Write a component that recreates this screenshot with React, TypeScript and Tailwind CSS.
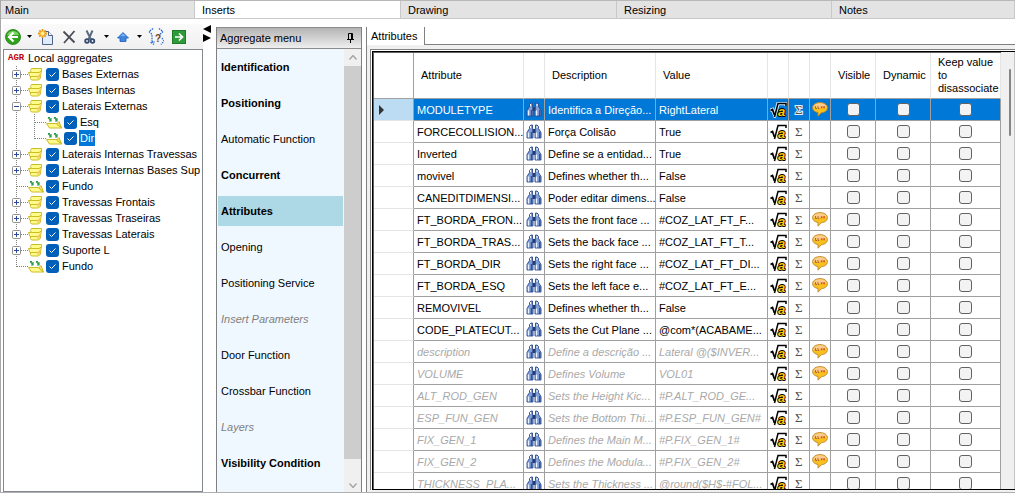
import React, { useState } from 'react';
import clsx from 'clsx';

interface TreeItem {
  label: string;
  leaf?: boolean;
  open?: boolean;
  children?: TreeItem[];
}

interface MenuItem {
  label: string;
  style?: 'bold' | 'disabled';
}

interface AttributeRow {
  name: string;
  description: string;
  value: string;
  comment?: boolean;
  inherited?: boolean;
}

const tabs = ['Main', 'Inserts', 'Drawing', 'Resizing', 'Notes'];

const tree: TreeItem[] = [
  { label: 'Bases Externas' },
  { label: 'Bases Internas' },
  { label: 'Laterais Externas', open: true, children: [{ label: 'Esq', leaf: true }, { label: 'Dir', leaf: true }] },
  { label: 'Laterais Internas Travessas' },
  { label: 'Laterais Internas Bases Sup' },
  { label: 'Fundo', leaf: true },
  { label: 'Travessas Frontais' },
  { label: 'Travessas Traseiras' },
  { label: 'Travessas Laterais' },
  { label: 'Suporte L' },
  { label: 'Fundo', leaf: true },
];

const menu: MenuItem[] = [
  { label: 'Identification', style: 'bold' },
  { label: 'Positioning', style: 'bold' },
  { label: 'Automatic Function' },
  { label: 'Concurrent', style: 'bold' },
  { label: 'Attributes', style: 'bold' },
  { label: 'Opening' },
  { label: 'Positioning Service' },
  { label: 'Insert Parameters', style: 'disabled' },
  { label: 'Door Function' },
  { label: 'Crossbar Function' },
  { label: 'Layers', style: 'disabled' },
  { label: 'Visibility Condition', style: 'bold' },
];

const rows: AttributeRow[] = [
  { name: 'MODULETYPE', description: 'Identifica a Direção...', value: 'RightLateral', comment: true },
  { name: 'FORCECOLLISION...', description: 'Força Colisão', value: 'True' },
  { name: 'Inverted', description: 'Define se a entidad...', value: 'True' },
  { name: 'movivel', description: 'Defines whether th...', value: 'False' },
  { name: 'CANEDITDIMENSI...', description: 'Poder editar dimens...', value: 'False' },
  { name: 'FT_BORDA_FRON...', description: 'Sets the front face ...', value: '#COZ_LAT_FT_F...', comment: true },
  { name: 'FT_BORDA_TRAS...', description: 'Sets the back face ...', value: '#COZ_LAT_FT_T...', comment: true },
  { name: 'FT_BORDA_DIR', description: 'Sets the right face ...', value: '#COZ_LAT_FT_DI...', comment: true },
  { name: 'FT_BORDA_ESQ', description: 'Sets the left face e...', value: '#COZ_LAT_FT_E...', comment: true },
  { name: 'REMOVIVEL', description: 'Defines whether th...', value: 'False' },
  { name: 'CODE_PLATECUT...', description: 'Sets the Cut Plane ...', value: '@com*(ACABAME...' },
  { name: 'description', description: 'Define a descrição ...', value: 'Lateral @($INVER...', comment: true, inherited: true },
  { name: 'VOLUME', description: 'Defines Volume', value: 'VOL01', comment: true, inherited: true },
  { name: 'ALT_ROD_GEN', description: 'Sets the Height Kic...', value: '#P.ALT_ROD_GE...', inherited: true },
  { name: 'ESP_FUN_GEN', description: 'Sets the Bottom Thi...', value: '#P.ESP_FUN_GEN#', inherited: true },
  { name: 'FIX_GEN_1', description: 'Defines the Main M...', value: '#P.FIX_GEN_1#', comment: true, inherited: true },
  { name: 'FIX_GEN_2', description: 'Defines the Modula...', value: '#P.FIX_GEN_2#', comment: true, inherited: true },
  { name: 'THICKNESS_PLA...', description: 'Sets the Thickness ...', value: '@round($H$-#FOL...', inherited: true },
];

/* ---------- icons ---------- */

const BackIcon = () => (
  <svg width="16" height="16" viewBox="0 0 16 16">
    <circle cx="8" cy="8" r="7.5" fill="#2fa31c" stroke="#1c7d12" strokeWidth="0.8" />
    <path d="M2 6a6.5 6.5 0 0 1 12 0z" fill="#7bd063" />
    <path d="M8.500 3.500 4 8l4.500 4.500M4.500 8H13" fill="none" stroke="#fff" strokeWidth="2.200" />
  </svg>
);

const NewIcon = () => (
  <svg width="16" height="16" viewBox="0 0 16 16">
    <path d="M4.500 2.500h6l4 4v9h-10z" fill="#dfeafa" stroke="#4f6287" />
    <path d="M10.500 2.500v4h4" fill="#fff" stroke="#4f6287" />
    <path d="M4.500 0v9M0 4.500h9M1.300 1.300l6.400 6.400M7.700 1.300 1.300 7.700" stroke="#e8981c" strokeWidth="1.800" />
    <circle cx="4.500" cy="4.500" r="2.200" fill="#fff3a0" stroke="#f5bc30" />
  </svg>
);

const DeleteIcon = () => (
  <svg width="14" height="14" viewBox="0 0 14 14">
    <path d="m1.500 1.500 11 11M12.500 1 2 13" fill="none" stroke="#4a4d55" strokeWidth="1.800" />
  </svg>
);

const CutIcon = () => (
  <svg width="12" height="14" viewBox="0 0 12 14">
    <path d="m2.500.500 4.500 9M8.500.500 4.500 9.500" stroke="#5c6b80" strokeWidth="2" />
    <circle cx="3" cy="11" r="1.800" fill="none" stroke="#34496e" strokeWidth="1.800" />
    <circle cx="8.500" cy="11" r="1.800" fill="none" stroke="#34496e" strokeWidth="1.800" />
  </svg>
);

const UpIcon = () => (
  <svg width="12" height="10" viewBox="0 0 12 10">
    <path d="M6 .500 11.500 6H9v3.500H3V6H.500z" fill="#3f86e0" stroke="#1d5cb8" strokeWidth="0.800" />
    <path d="M6 1.500 8.500 4h-5z" fill="#7db4f3" />
  </svg>
);

const CodeIcon = () => (
  <svg width="16" height="17" viewBox="0 0 16 17">
    <path
      d="M5 .500 1 3.500l3 3v7l-1 1 3 2M11 .500l4 3-3 3M14 10l2 3-3 3.500M4 14h3"
      fill="none"
      stroke="#2468d8"
      strokeWidth="1.300"
      strokeDasharray="1.500 1"
    />
    <text x="7" y="14" fontSize="10" fontWeight="bold" fill="#6b4420" fontFamily="Liberation Sans, sans-serif">?</text>
  </svg>
);

const GoIcon = () => (
  <svg width="14" height="14" viewBox="0 0 14 14">
    <rect x="0.500" y="0.500" width="13" height="13" fill="#2f9a3a" stroke="#1f7a2a" />
    <path d="M3 7h7M7 3.500 10.500 7 7 10.500" fill="none" stroke="#fff" strokeWidth="1.700" />
  </svg>
);

const CaretIcon = () => (
  <svg width="5" height="3" viewBox="0 0 5 3">
    <path d="M0 0h5L2.500 3z" fill="#000" />
  </svg>
);

const PinIcon = () => (
  <svg width="7" height="10" viewBox="0 0 7 10">
    <path d="M1.500 6V.500h4V6M0 6.500h7M3.500 7v3M4.500 1v5" fill="none" stroke="#000" />
  </svg>
);

const StackIcon = () => (
  <svg width="15" height="14" viewBox="0 0 15 14">
    <path d="M2.500 9.500h8l2-1.500v3l-2 2h-7l-1-1.500z" fill="#fffc8c" stroke="#cdbb28" />
    <path d="M.500 5.500h9.500l3.500-1.500-1 4-2.500 1.500h-8z" fill="#fffc8c" stroke="#cdbb28" />
    <path d="M3.500 1.500h10v2.500l-2.500 1.500h-7.500l-1-2z" fill="#fffc8c" stroke="#cdbb28" />
    <path d="M9.500 9 12.500 6v4l-3 2.500z" fill="#f5c868" />
  </svg>
);

const PieceIcon = () => (
  <svg width="16" height="13" viewBox="0 0 16 13">
    <path d="M.500 7.500h11l4 4.500H3.500z" fill="#fffc8c" stroke="#cdbb28" />
    <path d="m10.500 8 2.500-2.500 2.500 6.500z" fill="#f7dc68" stroke="#cdbb28" />
    <path d="M2 1.500l3 3M2 1.500h2M5 2v3H3M8 1.500l3 3M8 1.500h2M11 2v3H9" fill="none" stroke="#2a9a44" strokeWidth="1.200" />
  </svg>
);

const BinocularsIcon = () => (
  <svg width="16" height="15" viewBox="0 0 16 15" className="mx-auto block">
    <path d="M3.500 2.500 5 1h1.500v3L7 5.500V14H1V8.500l2.500-4z" fill="#7f9fd6" stroke="#2c4a8c" strokeWidth="0.900" />
    <path d="M9.500 1H11l1.500 1.500v2l2.500 4V14H9V5.500l.5-1.500z" fill="#7f9fd6" stroke="#2c4a8c" strokeWidth="0.900" />
    <path d="M6.500 5h3v4h-3z" fill="#263e78" />
    <path d="M2.500 8.500v5M10.500 8.500v5" stroke="#e9f1ff" strokeWidth="1.300" />
    <path d="M5.500 8v6M13.700 8v6" stroke="#2f50a0" strokeWidth="1.400" />
    <path d="M4.500 2v2M11 2v2" stroke="#fff" />
  </svg>
);

const FormulaIcon = ({ outlined }: { outlined?: boolean }) => (
  <svg width="17" height="16" viewBox="0 0 17 16" className="mx-auto block">
    {outlined && <path d="M0 8.500 2.500 7.500l2.300 6L8 1.500h8V4" fill="none" stroke="#cfe6fa" strokeWidth="3.500" />}
    <path d="M.500 8.500 2.500 7.500l2 5.500" fill="none" stroke="#000" strokeWidth="1.800" />
    <path d="M4.500 15 8 1.500h8V4" fill="none" stroke="#000" strokeWidth="1.500" />
    <text
      x="8"
      y="14"
      fontSize="13"
      fontWeight="bold"
      fontStyle="italic"
      fontFamily="Liberation Sans, sans-serif"
      fill="#ffc800"
      stroke="#000"
      strokeWidth="1.800"
      strokeLinejoin="round"
      paintOrder="stroke"
    >
      a
    </text>
  </svg>
);

const SigmaIcon = ({ outlined }: { outlined?: boolean }) => (
  <svg width="12" height="16" viewBox="0 0 12 16" className="mx-auto block">
    <text
      x="2"
      y="12"
      fontSize="13"
      fontStyle="normal"
      fontFamily="Liberation Serif, serif"
      fill="#505050"
      stroke={outlined ? '#e4f0fb' : 'none'}
      strokeWidth="2"
      paintOrder="stroke"
    >
      Σ
    </text>
  </svg>
);

const CommentIcon = () => (
  <svg width="16" height="15" viewBox="0 0 16 15" className="mx-auto block">
    <path
      d="M8 .600c4.200 0 7.400 2.200 7.400 5.100 0 2.800-2.400 4.700-6 5L6 14.200v-3.700C2.700 9.900.600 8.200.600 5.700.600 2.800 3.800.600 8 .600z"
      fill="#f9c11c"
      stroke="#b8863a"
      strokeWidth="0.900"
    />
    <path d="M8 1.300c3.600 0 6.200 1.500 6.600 4.200H1.400C1.800 2.800 4.400 1.300 8 1.300z" fill="#fbcb90" />
    <path d="M3.500 4v2.500h1.500M6 4v2.500h1.200" fill="none" stroke="#a8602a" strokeWidth="0.900" />
    <path d="M8.800 4.200h1.700v2H8.800zM11.200 4.200H13v2h-1.800z" fill="#e05a1c" />
  </svg>
);

/* Dotted guide lines of the tree, with the expander box when the node has one */
const Guide = ({ expander, last }: { expander?: '+' | '-'; last?: boolean }) => (
  <svg width="24" height="16" viewBox="0 0 24 16" className="shrink-0">
    <path d={last ? 'M12.500 0V9' : 'M12.500 0V16'} stroke="#808080" strokeDasharray="1 1" />
    <path d="M13 8.500H24" stroke="#808080" strokeDasharray="1 1" />
    {expander && (
      <>
        <rect x="8.500" y="4.500" width="8" height="8" rx="1" fill="#fff" stroke="#919191" />
        <path d={expander === '+' ? 'M10 8.500h5M12.500 6v5' : 'M10 8.500h5'} stroke="#2b4a9b" />
      </>
    )}
  </svg>
);

const Trunk = () => (
  <svg width="18" height="16" viewBox="0 0 18 16" className="shrink-0">
    <path d="M12.500 0V16" stroke="#808080" strokeDasharray="1 1" />
  </svg>
);

/* ---------- tree ---------- */

interface TreeRowProps {
  item: TreeItem;
  id: string;
  level: number;
  last: boolean;
  selected: boolean;
}

function TreeRow({ item, id, level, last, selected }: TreeRowProps) {
  const expander = item.leaf ? undefined : item.open ? '-' : '+';

  return (
    <div className="flex h-4 items-center">
      {level > 0 && <Trunk />}
      <Guide expander={expander} last={last} />
      <span className="flex w-[18px] shrink-0 items-center">{item.leaf ? <PieceIcon /> : <StackIcon />}</span>
      <span className="grid shrink-0">
        <input
          id={id}
          type="checkbox"
          defaultChecked
          className="col-start-1 row-start-1 size-[13px] appearance-none rounded-[3px] bg-[#005fb8]"
        />
        <svg width="13" height="13" viewBox="0 0 13 13" className="pointer-events-none col-start-1 row-start-1">
          <path d="m3.500 6.500 2 2 4-4" fill="none" stroke="#fff" />
        </svg>
      </span>
      <label
        htmlFor={id}
        className={clsx('ml-0.5 h-4 px-px leading-4 whitespace-nowrap', selected && 'bg-[#0078d7] text-white')}
      >
        {item.label}
      </label>
    </div>
  );
}

function AggregateTree() {
  return (
    <div className="min-h-0 flex-1 overflow-hidden border border-[#828790] bg-white">
      <div className="flex h-4 items-center">
        <span className="w-[23px] shrink-0 pl-1 font-['Liberation_Mono',monospace] text-[9px] font-bold text-[#c00000]">AGR</span>
        <span className="px-px">Local aggregates</span>
      </div>
      <ul>
        {tree.map((item, i) => (
          <li key={i}>
            <TreeRow item={item} id={`node-${i}`} level={0} last={i === tree.length - 1} selected={false} />
            {item.children && (
              <ul>
                {item.children.map((child, j) => (
                  <li key={j}>
                    <TreeRow
                      item={child}
                      id={`node-${i}-${j}`}
                      level={1}
                      last={j === item.children!.length - 1}
                      selected={child.label === 'Dir'}
                    />
                  </li>
                ))}
              </ul>
            )}
          </li>
        ))}
      </ul>
    </div>
  );
}

function Toolbar() {
  return (
    <div className="flex h-[25px] items-center bg-linear-to-b from-[#fafafa] to-[#f0f0f0] pl-0.5">
      <button aria-label="Back"><BackIcon /></button>
      <button aria-label="Back history" className="ml-1.5"><CaretIcon /></button>
      <button aria-label="New" className="ml-1.5"><NewIcon /></button>
      <button aria-label="Delete" className="ml-2"><DeleteIcon /></button>
      <button aria-label="Cut" className="ml-2"><CutIcon /></button>
      <button aria-label="Cut options" className="ml-2"><CaretIcon /></button>
      <button aria-label="Move up" className="ml-2"><UpIcon /></button>
      <button aria-label="Move options" className="ml-2"><CaretIcon /></button>
      <button aria-label="Expression" className="ml-1.5"><CodeIcon /></button>
      <button aria-label="Go" className="ml-2"><GoIcon /></button>
    </div>
  );
}

/* ---------- aggregate menu ---------- */

function AggregateMenu() {
  const [current, setCurrent] = useState('Attributes');

  return (
    <section className="flex w-[146px] shrink-0 flex-col border-x border-[#808080]">
      <header className="flex h-[22px] shrink-0 items-center justify-between border-y border-[#8c8c8c] bg-linear-to-b from-[#b4b4b4] to-[#efefef] pr-[7px] pl-[3px]">
        <h2>Aggregate menu</h2>
        <button aria-label="Pin"><PinIcon /></button>
      </header>
      <div className="flex min-h-0 flex-1">
        <nav className="flex flex-1 flex-col gap-1.5 overflow-hidden bg-[#f0f8ff] px-px py-[3px]">
          {menu.map((item) => (
            <button
              key={item.label}
              onClick={() => setCurrent(item.label)}
              className={clsx(
                'h-[30px] shrink-0 pl-[3px] text-left whitespace-nowrap',
                item.style === 'bold' && 'font-bold',
                item.style === 'disabled' && 'text-[#808080] italic',
                item.label === current && 'bg-[#add8e6]'
              )}
            >
              {item.label}
            </button>
          ))}
        </nav>
        <div className="flex w-[17px] flex-col bg-[#f0f0f0]">
          <button aria-label="Scroll up" className="flex h-[17px] items-center justify-center">
            <svg width="8" height="5" viewBox="0 0 8 5"><path d="m.500 4.500 3.500-4 3.500 4" fill="none" stroke="#a0a0a0" strokeWidth="1.300" /></svg>
          </button>
          <div className="flex-1 bg-[#cdcdcd]" />
          <div className="h-5 shrink-0" />
          <button aria-label="Scroll down" className="flex h-[13px] items-start justify-center pt-1">
            <svg width="8" height="5" viewBox="0 0 8 5"><path d="m.500.500 3.500 4 3.500-4" fill="none" stroke="#a0a0a0" strokeWidth="1.300" /></svg>
          </button>
        </div>
      </div>
    </section>
  );
}

/* ---------- attributes table ---------- */

const head = 'border-r border-b border-r-[#e5e5e5] border-b-[#a0a0a0] pl-[7px] text-left align-middle font-normal';
const cell = 'h-[22px] border-r border-b border-[#a0a0a0] p-0';
const textCell = 'overflow-hidden pl-[3px] whitespace-nowrap';

function CheckCell({ label }: { label: string }) {
  return (
    <td className={cell}>
      <input
        type="checkbox"
        aria-label={label}
        className="mx-auto block size-[13px] appearance-none rounded-[3px] border border-[#626262] bg-[#f3f3f3] checked:bg-[#005fb8]"
      />
    </td>
  );
}

function AttributesTable() {
  const selected = 0;

  return (
    <table className="w-full table-fixed border-separate border-spacing-0">
      <colgroup>
        <col className="w-10" />
        <col className="w-[110px]" />
        <col className="w-[21px]" />
        <col className="w-[111px]" />
        <col />
        <col className="w-[21px]" />
        <col className="w-[21px]" />
        <col className="w-[21px]" />
        <col className="w-[45px]" />
        <col className="w-[55px]" />
        <col className="w-[70px]" />
      </colgroup>
      <thead>
        <tr className="h-[46px] leading-[13px]">
          <td className="border-r border-b border-[#a0a0a0]" />
          <th className={head}>Attribute</th>
          <td className={head} />
          <th className={head}>Description</th>
          <th className={head}>Value</th>
          <td className={head} />
          <td className={head} />
          <td className={head} />
          <th className={head}>Visible</th>
          <th className={head}>Dynamic</th>
          <th className={head}>Keep value to disassociate</th>
        </tr>
      </thead>
      <tbody>
        {rows.map((row, i) => (
          <tr
            key={row.name}
            className={clsx(i === selected && 'bg-[#0078d7] text-white', row.inherited && 'text-[#a9a9a9] italic')}
          >
            <td className={clsx('border-r border-b border-r-[#a0a0a0] border-b-[#e5e5e5] p-0 pl-[5px]', i === selected ? 'bg-[#bcdcf4]' : 'bg-white')}>
              {i === selected && (
                <svg width="5" height="10" viewBox="0 0 5 10"><path d="M0 0v10l5-5z" fill="#333" /></svg>
              )}
            </td>
            <td className={clsx(cell, textCell)}>{row.name}</td>
            <td className={cell}><BinocularsIcon /></td>
            <td className={clsx(cell, textCell)}>{row.description}</td>
            <td className={clsx(cell, textCell)}>{row.value}</td>
            <td className={cell}><FormulaIcon outlined={i === selected} /></td>
            <td className={cell}><SigmaIcon outlined={i === selected} /></td>
            <td className={cell}>{row.comment && <CommentIcon />}</td>
            <CheckCell label={`${row.name} visible`} />
            <CheckCell label={`${row.name} dynamic`} />
            <CheckCell label={`${row.name} keep value to disassociate`} />
          </tr>
        ))}
      </tbody>
    </table>
  );
}

function AttributesPanel() {
  return (
    <section className="ml-1 flex min-w-0 flex-1 flex-col border-l border-[#808080]">
      <div className="flex h-[18px] shrink-0">
        <button className="w-[58px] border-r border-[#808080] pl-1 text-left">Attributes</button>
        <div className="flex-1 border-b border-[#808080]" />
      </div>
      <div className="flex min-h-0 flex-1 flex-col bg-[#f0f0f0] pt-1 pb-0.5 pl-[3px]">
        <div className="flex min-h-0 flex-1 border-t border-l border-[#808080] bg-white pt-px pl-px">
          <div className="flex min-h-0 min-w-0 flex-1 border-t border-b border-l border-black">
            <div className="min-w-0 flex-1 overflow-hidden border-t border-l border-[#606060]">
              <AttributesTable />
            </div>
            <div className="flex w-[14px] shrink-0 justify-end border-r border-[#c4c4c4] bg-[#f0f0f0] pt-[17px] pr-[3px]">
              <div className="h-[67px] w-0.5 rounded bg-[#858585]" />
            </div>
          </div>
        </div>
      </div>
    </section>
  );
}

export default function App() {
  const [tab, setTab] = useState('Inserts');

  return (
    <div className="flex h-screen flex-col overflow-hidden border-l border-[#a8a8a8] bg-white font-['Liberation_Sans',Arial,sans-serif] text-[11px] leading-4 text-black">
      <div role="tablist" className="flex h-[19px] shrink-0 border-t border-[#b8b8b8]">
        {tabs.map((name, i) => (
          <button
            key={name}
            role="tab"
            aria-selected={name === tab}
            onClick={() => setTab(name)}
            className={clsx(
              'border-r border-b border-[#c8c8c8] text-left',
              i === 0 && 'w-[194px] pl-1',
              i === 1 && 'w-[206px] pl-[7px]',
              i === 2 && 'w-[216px] pl-[7px]',
              i === 3 && 'w-[215px] pl-[7px]',
              i === 4 && 'flex-1 pl-[7px]',
              name === tab ? 'bg-white' : 'bg-[#e3e3e3]'
            )}
          >
            {name}
          </button>
        ))}
      </div>
      <div className="flex min-h-0 flex-1 border-b border-[#b0b0b0]">
        <aside className="flex w-[202px] shrink-0 flex-col pt-[5px] pl-0.5">
          <Toolbar />
          <AggregateTree />
        </aside>
        <div className="flex w-[13px] shrink-0 flex-col pt-1.5">
          <button aria-label="Collapse panel">
            <svg width="8" height="8" viewBox="0 0 8 8"><path d="M8 0v8L0 4z" /></svg>
          </button>
          <button aria-label="Expand panel" className="mt-px">
            <svg width="8" height="8" viewBox="0 0 8 8"><path d="M0 0v8l8-4z" /></svg>
          </button>
        </div>
        <div className="flex min-w-0 flex-1 pt-2">
          <AggregateMenu />
          <AttributesPanel />
        </div>
      </div>
    </div>
  );
}
